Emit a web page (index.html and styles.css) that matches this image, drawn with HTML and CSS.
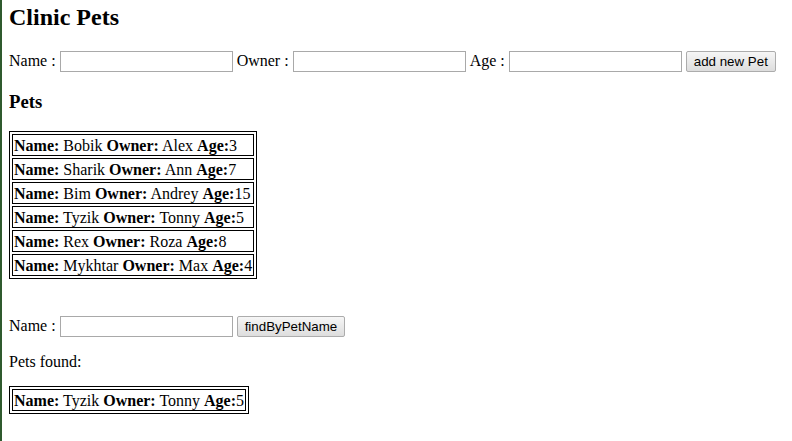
FILE: index.html
```html
<!DOCTYPE html>
<html>
<head>
<meta charset="utf-8">
<title>Clinic Pets</title>
<link rel="stylesheet" href="styles.css">
</head>
<body>
<h1 class="title">Clinic Pets</h1>
<form class="form-row add-form">
  <label class="lbl">Name :</label>
  <input class="field" type="text">
  <label class="lbl">Owner :</label>
  <input class="field" type="text">
  <label class="lbl">Age :</label>
  <input class="field" type="text">
  <button class="btn" type="button">add new Pet</button>
</form>
<h3 class="section">Pets</h3>
<table class="pets">
  <tr><td><b>Name:</b> Bobik <b>Owner:</b> Alex <b>Age:</b>3</td></tr>
  <tr><td><b>Name:</b> Sharik <b>Owner:</b> Ann <b>Age:</b>7</td></tr>
  <tr><td><b>Name:</b> Bim <b>Owner:</b> Andrey <b>Age:</b>15</td></tr>
  <tr><td><b>Name:</b> Tyzik <b>Owner:</b> Tonny <b>Age:</b>5</td></tr>
  <tr><td><b>Name:</b> Rex <b>Owner:</b> Roza <b>Age:</b>8</td></tr>
  <tr><td><b>Name:</b> Mykhtar <b>Owner:</b> Max <b>Age:</b>4</td></tr>
</table>
<form class="form-row find-form">
  <label class="lbl">Name :</label>
  <input class="field" type="text">
  <button class="btn" type="button">findByPetName</button>
</form>
<p class="found-label">Pets found:</p>
<table class="pets found">
  <tr><td><b>Name:</b> Tyzik <b>Owner:</b> Tonny <b>Age:</b>5</td></tr>
</table>
</body>
</html>
```
FILE: styles.css
```css
html {
  margin: 0;
  padding: 0;
  border-left: 2px solid #2f5a2e;
  background: #fff;
  min-height: 100%;
  box-sizing: border-box;
}
body {
  margin: 0 8px 0 7px;
  font-family: "Liberation Serif", "Times New Roman", serif;
  font-size: 16px;
  color: #000;
}
.title {
  font-size: 24px;
  font-weight: bold;
  margin: 4px 0 0 0;
}
.form-row {
  display: flex;
  align-items: baseline;
  gap: 4px;
  margin: 20px 0 0 0;
}
.lbl {
  font-size: 16px;
}
.field {
  box-sizing: border-box;
  width: 173px;
  height: 21px;
  border: 1px solid #a9a9a9;
  padding: 1px 2px;
  margin: 0;
  font-family: "Liberation Sans", Arial, sans-serif;
  font-size: 13.33px;
  background: #fff;
}
.btn {
  box-sizing: border-box;
  height: 21px;
  margin: 0;
  padding: 1px 7px;
  border: 1px solid #acacac;
  border-radius: 2px;
  background: linear-gradient(#f6f6f6, #dddddd);
  font-family: "Liberation Sans", Arial, sans-serif;
  font-size: 13.33px;
  color: #000;
}
.section {
  font-size: 18.72px;
  font-weight: bold;
  margin: 19px 0 0 0;
}
.pets {
  border: 1px solid #000;
  border-spacing: 2px;
  margin-top: 18px;
}
.pets td {
  border: 1px solid #000;
  padding: 2px 1px 0 1px;
  line-height: 18px;
}
.find-form {
  margin-top: 37px;
}
.found-label {
  margin: 16px 0 0 0;
}
.found {
  margin-top: 15px;
}
```
